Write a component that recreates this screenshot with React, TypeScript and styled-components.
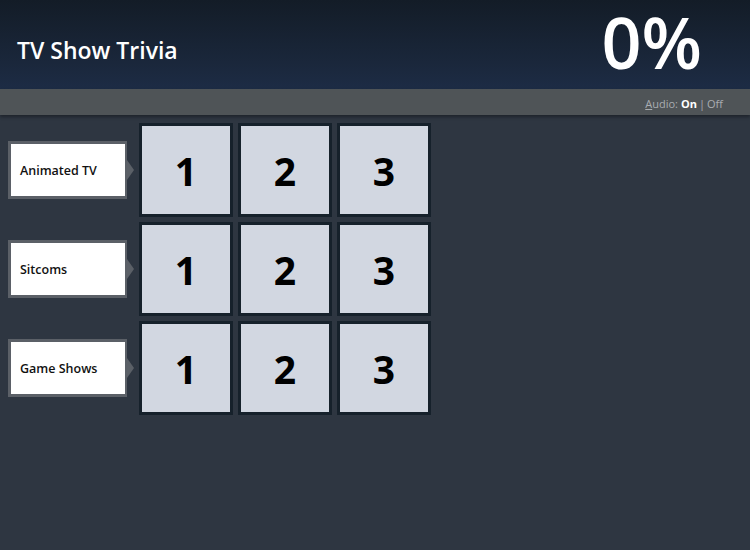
import React from "react";
import styled, { createGlobalStyle } from "styled-components";

const Global = createGlobalStyle`
  html, body { margin: 0; padding: 0; }
  body {
    width: 750px;
    height: 550px;
    overflow: hidden;
    background: #2e3641;
    font-family: "Open Sans", "Liberation Sans", sans-serif;
  }
`;

const Page = styled.div`
  width: 750px;
  height: 550px;
  display: flex;
  flex-direction: column;
  background: #2e3641;
`;

const Header = styled.header`
  height: 89px;
  display: flex;
  align-items: center;
  justify-content: space-between;
  padding: 0 48px 0 17px;
  background: linear-gradient(180deg, #131c27 0%, #1a273b 70%, #1d2c45 100%);
  box-sizing: border-box;
`;

const Title = styled.h1`
  margin: 10px 0 0 0;
  color: #ffffff;
  font-size: 23px;
  font-weight: 600;
  letter-spacing: 0;
`;

const Score = styled.div`
  color: #ffffff;
  font-size: 70px;
  font-weight: 600;
  line-height: 1.25;
  padding-bottom: 3px;
`;

const Bar = styled.div`
  height: 26px;
  background: #4f5457;
  display: flex;
  align-items: center;
  justify-content: flex-end;
  padding: 2px 27px 0 0;
  box-sizing: border-box;
  box-shadow: 0 2px 3px rgba(0, 0, 0, 0.35);
  position: relative;
  z-index: 1;
`;

const Audio = styled.div`
  font-size: 11px;
  color: #a9adb1;
  display: flex;
  align-items: center;
  gap: 2px;
`;

const Accel = styled.span`
  text-decoration: underline;
`;

const On = styled.span`
  color: #ffffff;
  font-weight: 700;
  margin-left: 1px;
`;

const Board = styled.main`
  display: flex;
  flex-direction: column;
  gap: 5px;
  padding: 8px 0 0 8px;
`;

const Row = styled.div`
  display: flex;
  align-items: center;
`;

const Label = styled.div`
  position: relative;
  width: 119px;
  height: 58px;
  box-sizing: border-box;
  border: 3px solid #5b6067;
  border-right-width: 2px;
  background: #ffffff;
  display: flex;
  align-items: center;
  padding-left: 9px;
  font-size: 12.5px;
  font-weight: 600;
  color: #111111;
  margin-right: 12px;
  &::after {
    content: "";
    position: absolute;
    right: -9px;
    top: 50%;
    transform: translateY(-50%);
    border-top: 10px solid transparent;
    border-bottom: 10px solid transparent;
    border-left: 7px solid #5b6067;
  }
`;

const Tiles = styled.div`
  display: flex;
  gap: 5px;
`;

const Tile = styled.button`
  width: 94px;
  height: 94px;
  box-sizing: border-box;
  border: 3px solid #16212b;
  background: #d2d7e1;
  color: #000000;
  font-family: "Open Sans", "Liberation Sans", sans-serif;
  font-size: 39px;
  font-weight: 700;
  display: flex;
  align-items: center;
  justify-content: center;
  padding: 0;
  cursor: pointer;
`;

const categories = ["Animated TV", "Sitcoms", "Game Shows"];

export default function App() {
  return (
    <>
      <Global />
      <Page>
        <Header>
          <Title>TV Show Trivia</Title>
          <Score>0%</Score>
        </Header>
        <Bar>
          <Audio>
            <span>
              <Accel>A</Accel>udio:
            </span>
            <On>On</On>
            <span>|</span>
            <span>Off</span>
          </Audio>
        </Bar>
        <Board>
          {categories.map((c) => (
            <Row key={c}>
              <Label>{c}</Label>
              <Tiles>
                {[1, 2, 3].map((n) => (
                  <Tile key={n}>{n}</Tile>
                ))}
              </Tiles>
            </Row>
          ))}
        </Board>
      </Page>
    </>
  );
}
